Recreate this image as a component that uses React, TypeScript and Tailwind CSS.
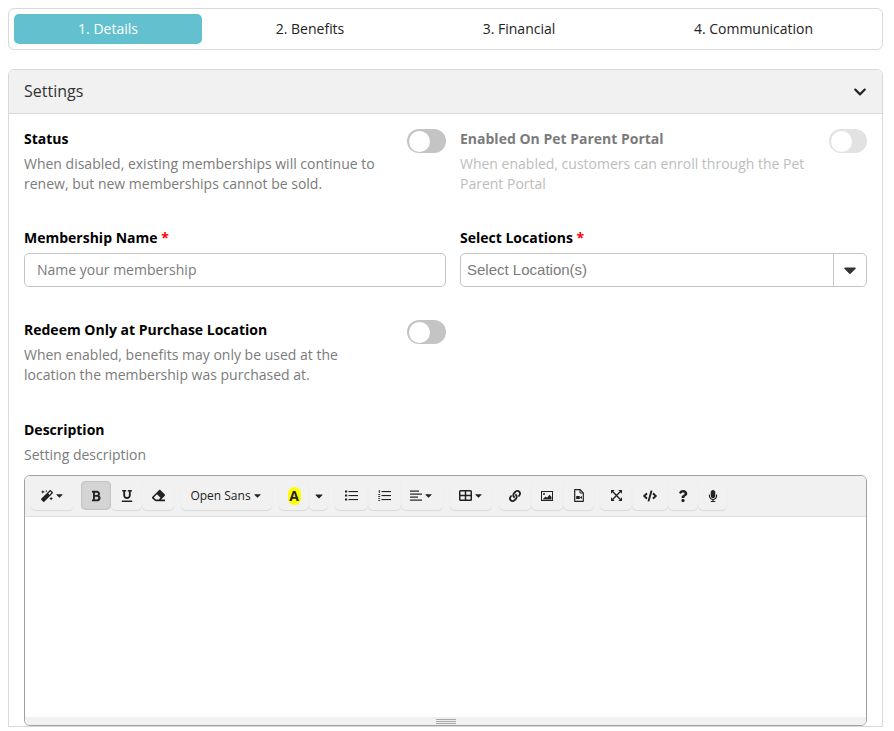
import React from "react";
import { FaMagic, FaBold, FaUnderline, FaEraser, FaLink, FaCode, FaQuestion, FaMicrophone, FaCaretDown, FaChevronDown } from "react-icons/fa";

function Toggle({ disabled }: { disabled?: boolean }) {
  return (
    <div className={`h-[24px] rounded-full p-[1.5px] shrink-0 ${disabled ? "w-[38px] bg-[#e2e2e2]" : "w-[39px] bg-[#c4c4c4]"}`}>
      <div className="w-[21px] h-[21px] rounded-full bg-white" />
    </div>
  );
}

function Btn({ w, active, children }: { w: number; active?: boolean; children: React.ReactNode }) {
  return (
    <div
      style={{ width: w }}
      className={`h-[29px] shrink-0 flex items-center justify-center rounded-[5px] text-[#222] ${active ? "bg-[#d4d4d4] shadow-[inset_0_0_2px_rgba(0,0,0,0.25)]" : "shadow-[0_1px_1px_rgba(0,0,0,0.1)]"}`}
    >
      {children}
    </div>
  );
}

const Caret = () => <FaCaretDown className="w-[11px] h-[11px] ml-[1px]" />;

const ListUl = () => (
  <svg width="13" height="11" viewBox="0 0 13 11" fill="#222">
    <rect x="0" y="0.5" width="2.2" height="2" /><rect x="0" y="4.5" width="2.2" height="2" /><rect x="0" y="8.5" width="2.2" height="2" />
    <rect x="3.5" y="1" width="9.5" height="1.1" /><rect x="3.5" y="5" width="9.5" height="1.1" /><rect x="3.5" y="9" width="9.5" height="1.1" />
  </svg>
);
const ListOl = () => (
  <svg width="13" height="11" viewBox="0 0 13 11" fill="#222">
    <rect x="0.8" y="0" width="1" height="3" /><rect x="0.2" y="4" width="2" height="0.9" /><rect x="0.2" y="6" width="2" height="0.9" /><rect x="0.2" y="8" width="2" height="0.8" /><rect x="0.2" y="10" width="2" height="0.8" />
    <rect x="3.5" y="1" width="9.5" height="1.1" /><rect x="3.5" y="5" width="9.5" height="1.1" /><rect x="3.5" y="9" width="9.5" height="1.1" />
  </svg>
);
const AlignLeft = () => (
  <svg width="12" height="11" viewBox="0 0 12 11" fill="#222">
    <rect x="0" y="0.5" width="9" height="1.2" /><rect x="0" y="3.5" width="12" height="1.2" /><rect x="0" y="6.5" width="8" height="1.2" /><rect x="0" y="9.5" width="12" height="1.2" />
  </svg>
);
const TableIco = () => (
  <svg width="13" height="11" viewBox="0 0 13 11" fill="none" stroke="#222" strokeWidth="1.5">
    <rect x="0.75" y="0.75" width="11.5" height="9.5" rx="0.8" /><path d="M0.75 5.5H12.25M6.5 0.75V10.25" />
  </svg>
);
const ImageIco = () => (
  <svg width="12" height="10" viewBox="0 0 12 10" fill="none">
    <rect x="0.5" y="0.5" width="11" height="9" stroke="#222" />
    <circle cx="3" cy="3" r="1" fill="#222" />
    <path d="M1.5 8.5 L4.5 5.5 L6 6.8 L8.5 3.8 L10.5 6 V8.5 Z" fill="#222" />
  </svg>
);
const FileIco = () => (
  <svg width="10" height="13" viewBox="0 0 10 13" fill="none">
    <path d="M0.7 0.7H6.2L9.3 3.8V12.3H0.7Z" stroke="#222" strokeWidth="1.2" strokeLinejoin="round" />
    <path d="M6 1V4H9" stroke="#222" />
    <rect x="2.2" y="7" width="3.6" height="3" fill="#222" /><path d="M5.8 8.5 L8 7V10Z" fill="#222" />
  </svg>
);
const ExpandIco = () => (
  <svg width="11" height="11" viewBox="0 0 12 12" fill="#222">
    <path d="M0 0H4L0 4Z" /><path d="M12 0H8L12 4Z" /><path d="M0 12H4L0 8Z" /><path d="M12 12H8L12 8Z" />
    <path d="M2 2L10 10M10 2L2 10" stroke="#222" strokeWidth="1.5" />
  </svg>
);

export default function App() {
  return (
    <div className="h-[731px] overflow-hidden bg-white pl-2 pr-[11px] pt-2 text-[14px] [font-family:'Open_Sans',sans-serif] text-[#222]">
      <div className="h-[42px] border border-[#d9d9d9] rounded-[6px] p-[5px] flex items-stretch">
        <div className="w-[188px] pb-[2px] rounded-[5px] bg-[#63c1cf] text-white flex items-center justify-center">1. Details</div>
        <div className="w-[216px] pb-[2px] flex items-center justify-center">2. Benefits</div>
        <div className="w-[202px] pb-[2px] flex items-center justify-center">3. Financial</div>
        <div className="w-[257px] pb-[2px] pl-[10px] flex items-center justify-center">4. Communication</div>
      </div>

      <div className="mt-[19px] border border-[#d9d9d9] rounded-t-[6px]">
        <div className="h-[44px] bg-[#f1f1f1] border-b border-[#d9d9d9] rounded-t-[6px] px-[15px] flex items-center justify-between">
          <span className="text-[16px] text-[#333] pb-[2px]">Settings</span>
          <FaChevronDown className="w-[14px] h-[14px] text-[#222]" />
        </div>

        <div className="px-[15px] pt-[15px]">
          <div className="grid grid-cols-[422px_407px] gap-x-[14px]">
            <div className="flex justify-between h-[99px]">
              <div>
                <div className="font-bold text-black leading-[20px]">Status</div>
                <div className="mt-[5px] w-[365px] text-[#7b7b7b] leading-[20px]">When disabled, existing memberships will continue to renew, but new memberships cannot be sold.</div>
              </div>
              <Toggle />
            </div>
            <div className="flex justify-between h-[99px]">
              <div>
                <div className="font-bold text-[#7b7b7b] leading-[20px]">Enabled On Pet Parent Portal</div>
                <div className="mt-[5px] w-[355px] text-[#bdbdbd] leading-[20px]">When enabled, customers can enroll through the Pet Parent Portal</div>
              </div>
              <Toggle disabled />
            </div>

            <div className="h-[92px]">
              <div className="font-bold text-black leading-[20px]">Membership Name <span className="text-[#f00]">*</span></div>
              <div className="mt-[5px] h-[34px] pb-[2px] border border-[#c4c4c4] rounded-[5px] flex items-center px-3 text-[#7b7b7b]">Name your membership</div>
            </div>
            <div className="h-[92px]">
              <div className="font-bold text-black leading-[20px]">Select Locations <span className="text-[#f00]">*</span></div>
              <div className="mt-[5px] h-[34px] border border-[#c4c4c4] rounded-[5px] flex items-center [font-family:'Liberation_Sans',sans-serif] text-[15px] text-[#7b7b7b]">
                <span className="flex-1 pl-[6px]">Select Location(s)</span>
                <div className="w-[33px] h-full border-l border-[#c4c4c4] flex items-center justify-center text-[#333]"><FaCaretDown className="w-[20px] h-[20px]" /></div>
              </div>
            </div>

            <div className="flex justify-between h-[100px]">
              <div>
                <div className="font-bold text-black leading-[20px]">Redeem Only at Purchase Location</div>
                <div className="mt-[5px] w-[345px] text-[#7b7b7b] leading-[20px]">When enabled, benefits may only be used at the location the membership was purchased at.</div>
              </div>
              <Toggle />
            </div>
            <div />
          </div>

          <div className="font-bold text-black leading-[20px]">Description</div>
          <div className="mt-[5px] text-[#7b7b7b] leading-[20px]">Setting description</div>

          <div className="mt-[10px] border border-[#a0a0a0] rounded-[6px] overflow-hidden">
            <div className="h-[41px] bg-[#f1f1f1] border-b border-[#dedede] pl-[6px] pt-[5px] flex items-start text-[12px]">
              <Btn w={43}><FaMagic className="w-[12px] h-[12px]" /><Caret /></Btn>
              <div className="w-[7px] shrink-0" />
              <Btn w={30} active><FaBold className="w-[12px] h-[12px] -ml-[1px]" /></Btn>
              <Btn w={31}><FaUnderline className="w-[12px] h-[12px]" /></Btn>
              <Btn w={32}><FaEraser className="w-[13px] h-[13px]" /></Btn>
              <div className="w-[7px] shrink-0" />
              <Btn w={91}><span className="leading-none">Open Sans</span><Caret /></Btn>
              <div className="w-[7px] shrink-0" />
              <Btn w={30}><span className="w-[13px] h-[18px] rounded-full bg-[#ffff00] flex items-center justify-center font-bold text-[14px] leading-none">A</span></Btn>
              <Btn w={19}><FaCaretDown className="w-[12px] h-[12px]" /></Btn>
              <div className="w-[7px] shrink-0" />
              <Btn w={33}><ListUl /></Btn>
              <Btn w={33}><ListOl /></Btn>
              <Btn w={42}><AlignLeft /><Caret /></Btn>
              <div className="w-[7px] shrink-0" />
              <Btn w={42}><TableIco /><Caret /></Btn>
              <div className="w-[7px] shrink-0" />
              <Btn w={32}><FaLink className="w-[12px] h-[12px]" /></Btn>
              <Btn w={32}><ImageIco /></Btn>
              <Btn w={31}><FileIco /></Btn>
              <div className="w-[6px] shrink-0" />
              <Btn w={32}><ExpandIco /></Btn>
              <Btn w={36}><FaCode className="w-[14px] h-[14px]" /></Btn>
              <Btn w={30}><FaQuestion className="w-[12px] h-[12px]" /></Btn>
              <Btn w={29}><FaMicrophone className="w-[12px] h-[12px]" /></Btn>
            </div>
            <div className="h-[200px] bg-white" />
            <div className="h-[8px] bg-[#f1f1f1] flex flex-col items-center justify-center gap-[1px]">
              <div className="w-[20px] h-px bg-[#a8a8a8]" />
              <div className="w-[20px] h-px bg-[#a8a8a8]" />
              <div className="w-[20px] h-px bg-[#a8a8a8]" />
            </div>
          </div>
        </div>
      </div>
    </div>
  );
}
